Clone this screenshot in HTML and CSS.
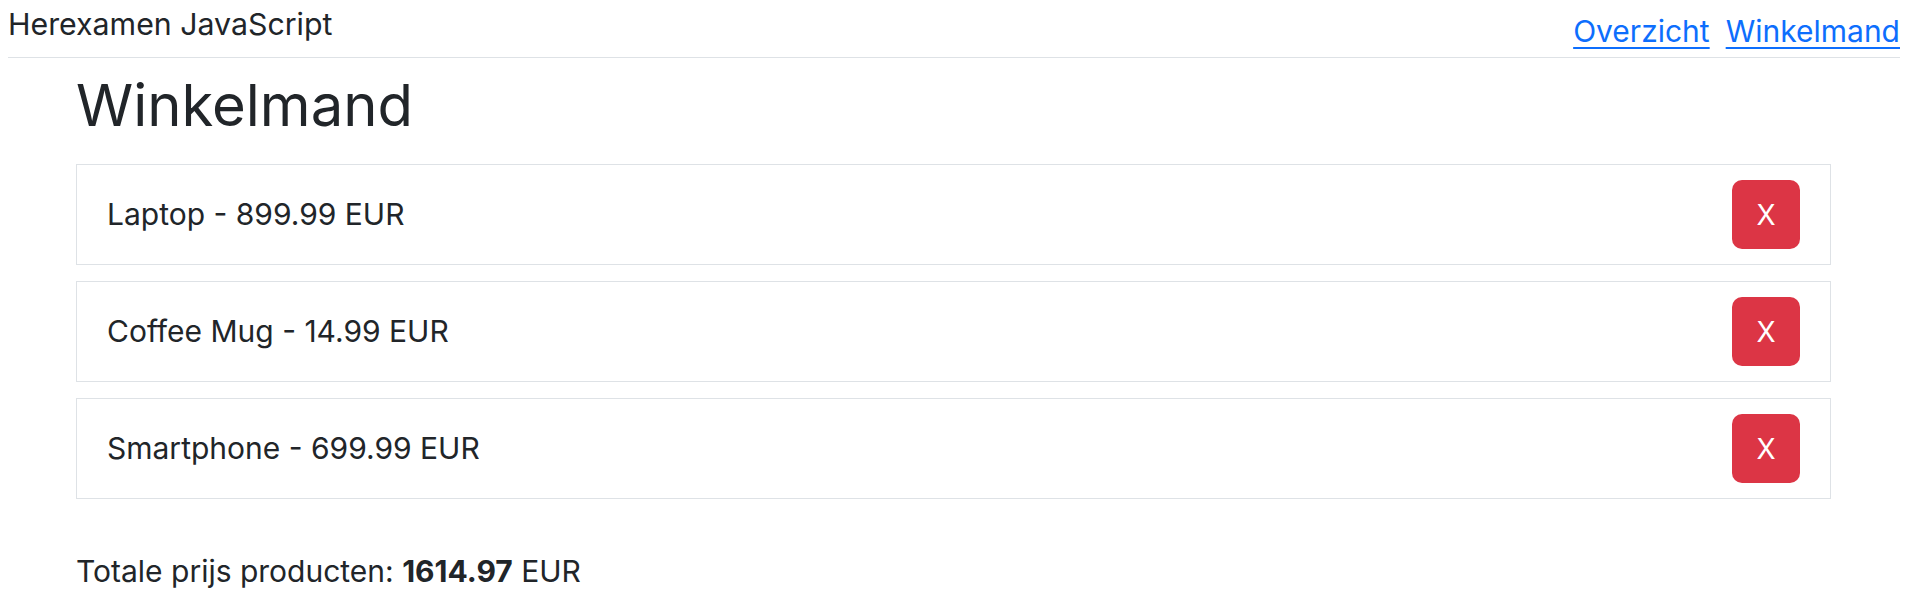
FILE: index.html
```html
<!DOCTYPE html>
<html lang="nl">
<head>
<meta charset="utf-8">
<title>Winkelmand</title>
<link rel="stylesheet" href="styles.css">
</head>
<body>
<header class="topbar">
  <div class="brand">Herexamen JavaScript</div>
  <nav class="nav">
    <a href="#" class="nav-link">Overzicht</a>
    <a href="#" class="nav-link">Winkelmand</a>
  </nav>
</header>
<main class="content">
  <h1 class="page-title">Winkelmand</h1>
  <ul class="cart">
    <li class="cart-item">
      <span class="cart-text">Laptop - 899.99 EUR</span>
      <button class="btn-remove" type="button">X</button>
    </li>
    <li class="cart-item">
      <span class="cart-text">Coffee Mug - 14.99 EUR</span>
      <button class="btn-remove" type="button">X</button>
    </li>
    <li class="cart-item">
      <span class="cart-text">Smartphone - 699.99 EUR</span>
      <button class="btn-remove" type="button">X</button>
    </li>
  </ul>
  <p class="total">Totale prijs producten: <strong>1614.97</strong> EUR</p>
</main>
</body>
</html>
```

FILE: styles.css
```css
html, body {
  background: #ffffff;
}

body {
  margin: 8px;
  font-family: Inter, "Noto Sans", "Liberation Sans", sans-serif;
  color: #212529;
}

.topbar {
  display: flex;
  justify-content: space-between;
  align-items: flex-start;
  height: 49px;
  border-bottom: 1px solid #dee2e6;
}

.brand {
  font-size: 30.3px;
  line-height: 32px;
}

.nav {
  display: flex;
  gap: 16px;
  margin-top: 6px;
}

.nav-link {
  font-size: 30px;
  line-height: 34px;
  color: #0d6efd;
  text-decoration: underline;
  text-decoration-thickness: 2px;
  text-underline-offset: 5px;
}

.content {
  padding: 0 69px 0 68px;
}

.page-title {
  margin: 14px 0 25px;
  font-size: 58px;
  font-weight: 400;
  line-height: 67px;
}

.cart {
  list-style: none;
  margin: 0;
  padding: 0;
  display: flex;
  flex-direction: column;
  gap: 16px;
}

.cart-item {
  display: flex;
  justify-content: space-between;
  align-items: center;
  border: 1px solid #dee2e6;
  padding: 15px 30px 15px 30px;
}

.cart-text {
  font-size: 30px;
  line-height: 45px;
}

.btn-remove {
  width: 68px;
  height: 69px;
  border: none;
  border-radius: 10px;
  background: #dc3545;
  color: #ffffff;
  font-family: inherit;
  font-size: 28px;
  padding: 0;
  cursor: pointer;
}

.total {
  margin: 50px 0 0;
  font-size: 30px;
  line-height: 45px;
}

.total strong {
  font-weight: 700;
}
```
